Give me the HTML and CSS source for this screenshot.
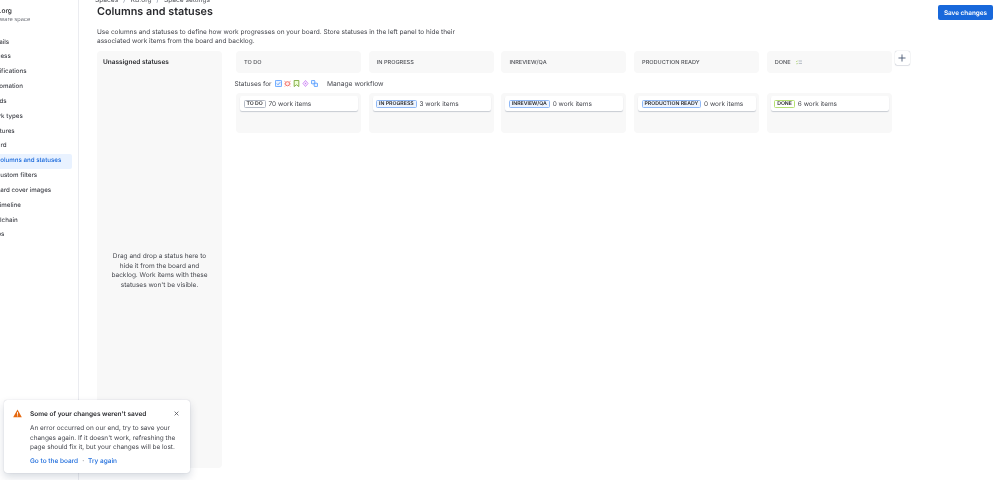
FILE: index.html
```html
<!DOCTYPE html>
<html lang="en">
<head>
<meta charset="utf-8">
<title>Columns and statuses</title>
<link rel="stylesheet" href="styles.css">
</head>
<body>
<div class="page">
  <aside class="sidebar">
    <div class="sidebar-inner">
      <div class="space">
        <div class="space-name">KB.org</div>
        <div class="space-type">Software space</div>
      </div>
      <nav class="nav">
        <a class="nav-item">Details</a>
        <a class="nav-item">Access</a>
        <a class="nav-item">Notifications</a>
        <a class="nav-item">Automation</a>
        <a class="nav-item">Fields</a>
        <a class="nav-item">Work types</a>
        <a class="nav-item">Features</a>
        <a class="nav-item">Board</a>
        <a class="nav-item sub active">Columns and statuses</a>
        <a class="nav-item sub">Custom filters</a>
        <a class="nav-item sub">Card cover images</a>
        <a class="nav-item sub">Timeline</a>
        <a class="nav-item">Toolchain</a>
        <a class="nav-item">Apps</a>
      </nav>
    </div>
  </aside>
  <main class="main">
    <div class="breadcrumbs"><span>Spaces</span><span class="sep">/</span><span>KB.org</span><span class="sep">/</span><span>Space settings</span></div>
    <div class="title-row">
      <h1 class="title">Columns and statuses</h1>
      <button class="save">Save changes</button>
    </div>
    <p class="intro">Use columns and statuses to define how work progresses on your board. Store statuses in the left panel to hide their associated work items from the board and backlog.</p>
    <div class="workspace">
      <section class="unassigned">
        <h2 class="un-title">Unassigned statuses</h2>
        <p class="un-text">Drag and drop a status here to hide it from the board and backlog. Work items with these statuses won't be visible.</p>
      </section>
      <section class="board">
        <div class="board-grid">
          <div class="col-head">TO DO</div>
          <div class="col-head">IN PROGRESS</div>
          <div class="col-head">INREVIEW/QA</div>
          <div class="col-head">PRODUCTION READY</div>
          <div class="col-head">DONE
            <svg class="done-icon" viewBox="0 0 8 6" width="6" height="5"><path d="M0 1l1 1 1.4-1.6M0 4.2l1 1 1.4-1.6" fill="none" stroke="#94c748" stroke-width=".8"/><path d="M3.6 1H8M3.6 4.2H8" fill="none" stroke="#8590a2" stroke-width=".8"/></svg>
          </div>
          <button class="add" aria-label="Add column"><svg viewBox="0 0 10 10" width="8" height="8"><path d="M5 .6v8.8M.6 5h8.8" stroke="#44546f" stroke-width="1.1" fill="none"/></svg></button>
          <div class="statuses-row">
            <span>Statuses for</span>
            <span class="types">
              <svg viewBox="0 0 9 9" width="7" height="7"><rect x=".5" y=".5" width="8" height="8" rx="1" fill="#e9f2ff" stroke="#388bff"/><path d="M2.4 4.6l1.5 1.5 2.8-3.2" fill="none" stroke="#388bff"/></svg>
              <svg viewBox="0 0 9 9" width="7" height="7"><circle cx="4.5" cy="4.8" r="2.7" fill="#ffeceb" stroke="#f15b50"/><path d="M.5 1.5l2 1.4M8.5 1.5l-2 1.4M.3 5h1.4M7.3 5h1.4M1 8.4l1.2-1.2M8 8.4L6.8 7.2" stroke="#f15b50" stroke-width=".8"/></svg>
              <svg viewBox="0 0 9 9" width="7" height="7"><path d="M1.5.6h6v7.8L4.5 6.2 1.5 8.4z" fill="#efffd6" stroke="#6a9a23"/></svg>
              <svg viewBox="0 0 9 9" width="7" height="7"><path d="M4.5.6L7.8 4.5 4.5 8.4 1.2 4.5z" fill="#f8eefe" stroke="#c97cf4"/><circle cx="4.5" cy="4.5" r=".9" fill="#c97cf4"/></svg>
              <svg viewBox="0 0 9 9" width="7" height="7"><rect x=".5" y=".5" width="4.4" height="4.4" rx="1" fill="#e9f2ff" stroke="#388bff"/><rect x="4.1" y="4.1" width="4.4" height="4.4" rx="1" fill="#e9f2ff" stroke="#388bff"/></svg>
            </span>
            <span class="manage">Manage workflow</span>
          </div>
          <div class="col-body"><div class="card"><span class="lozenge grey">TO DO</span><span class="count">70 work items</span></div></div>
          <div class="col-body"><div class="card"><span class="lozenge blue">IN PROGRESS</span><span class="count">3 work items</span></div></div>
          <div class="col-body"><div class="card"><span class="lozenge blue">INREVIEW/QA</span><span class="count">0 work items</span></div></div>
          <div class="col-body"><div class="card"><span class="lozenge blue">PRODUCTION READY</span><span class="count">0 work items</span></div></div>
          <div class="col-body"><div class="card"><span class="lozenge green">DONE</span><span class="count">6 work items</span></div></div>
        </div>
      </section>
    </div>
  </main>
</div>
<div class="toast">
  <svg class="warn" viewBox="0 0 10 10" width="9" height="9"><path d="M5 .5l4.8 8.8H.2z" fill="#e56910"/><path d="M5 3.4v3" stroke="#fff" stroke-width="1"/><circle cx="5" cy="7.6" r=".6" fill="#fff"/></svg>
  <div class="toast-body">
    <div class="toast-title">Some of your changes weren't saved</div>
    <p class="toast-text">An error occurred on our end, try to save your changes again. If it doesn't work, refreshing the page should fix it, but your changes will be lost.</p>
    <div class="toast-actions"><a>Go to the board</a><span class="dot">·</span><a>Try again</a></div>
  </div>
  <svg class="close" viewBox="0 0 8 8" width="5" height="5"><path d="M1 1l6 6M7 1L1 7" stroke="#44464d" stroke-width="1.2"/></svg>
</div>
</body>
</html>
```
FILE: styles.css
```css
* { box-sizing: border-box; }
html, body { margin: 0; height: 100%; overflow: hidden; }
body { font-family: Inter, "Liberation Sans", sans-serif; font-size: 6.2px; color: #292a2e; background: #fff; text-rendering: geometricPrecision; filter: blur(.25px); }
.page { display: flex; height: 480px; }
.sidebar { width: 79px; flex: none; border-right: 1px solid #ebecf0; overflow: hidden; }
.sidebar-inner { margin-left: -11px; width: 83px; padding-top: 7px; }
.space { height: 28.5px; }
.space-name { font-size: 6.6px; font-weight: 500; line-height: 9px; padding-left: 1.6px; }
.space-type { font-size: 5.6px; color: #6b6e76; line-height: 8px; }
.nav { display: flex; flex-direction: column; }
.nav-item { display: block; height: 14.85px; line-height: 14.85px; white-space: nowrap; color: #44464d; font-weight: 450; border-radius: 2px; }
.sub { padding-left: 6.7px; }
.active { color: #1868db; background: #e9f2ff; font-weight: 500; }
.main { flex: 1; min-width: 0; padding-left: 18px; }
.breadcrumbs { display: flex; gap: 5px; font-size: 6.6px; color: #505258; height: 2px; line-height: 0; margin-left: -2px; }
.sep { color: #8590a2; }
.title-row { display: flex; justify-content: space-between; align-items: flex-start; padding-right: 5px; height: 22px; margin-top: 3px; }
.title { font-size: 10.8px; line-height: 14px; font-weight: 600; margin: 0; color: #292a2e; }
.save { width: 55px; height: 15px; border: 0; border-radius: 2px; background: #1868db; color: #fff; font: 600 6.4px Inter, sans-serif; padding: 0; text-rendering: geometricPrecision; }
.intro { margin: 0; width: 378px; font-size: 6.5px; line-height: 9.6px; color: #44464d; height: 24px; padding-top: .5px; }
.workspace { display: flex; gap: 14px; align-items: flex-start; }
.unassigned { width: 125px; height: 417px; background: #f8f8f8; border-radius: 4px; padding: 5.5px 5.5px 0; flex: none; }
.un-title { margin: 0; font-size: 6.5px; line-height: 10px; font-weight: 600; will-change: transform; }
.un-text { margin: 185px 6.5px 0; text-align: center; font-size: 6.5px; line-height: 9.5px; color: #44464d; will-change: transform; }
.board-grid { display: grid; grid-template-columns: repeat(5, 125px) 13px; column-gap: 7.7px; grid-template-rows: 22px 20px 40px; }
.col-head { background: #f8f8f8; border-radius: 4px; font-size: 5.6px; color: #505258; font-weight: 500; padding: 1px 0 0 8px; display: flex; align-items: center; gap: 5px; }
.add { width: 15px; height: 14px; padding: 0; margin: 0 0 0 -4.7px; background: #fff; border: 0; border-radius: 2px; box-shadow: 0 0 1px rgba(9,30,66,.4), 0 1px 1px rgba(9,30,66,.1); display: flex; align-items: center; justify-content: center; }
.statuses-row { grid-column: 1 / -1; display: flex; align-items: center; font-size: 6.5px; color: #44464d; margin-left: -1.5px; padding-top: 1px; }
.types { display: flex; gap: 2px; margin-left: 3px; }
.manage { margin-left: 9.5px; font-size: 6.7px; }
.col-body { background: #f8f8f8; border-radius: 4px; padding: 3px 3px 3px 4px; }
.card { width: 118px; height: 15px; background: #fff; border-radius: 2px; box-shadow: 0 1px 1px rgba(9,30,66,.2); display: flex; align-items: center; padding-left: 3.5px; font-size: 6.45px; color: #44464d; }
.lozenge { font-size: 5.2px; font-weight: 600; line-height: 6px; padding: 0 1.9px; border-radius: 1.5px; border: .7px solid; color: #292a2e; margin-right: 3px; white-space: nowrap; }
.grey { border-color: #b3b9c4; }
.blue { border-color: #8fb8f6; background: #eef5ff; }
.green { border-color: #b3df72; }
.toast { position: fixed; left: 4px; top: 400px; width: 186px; height: 73px; background: #fff; border-radius: 3px; box-shadow: 0 4px 8px rgba(9,30,66,.16), 0 0 1px rgba(9,30,66,.3); display: flex; padding: 9px 8px 0 9px; }
.warn { flex: none; }
.toast-body { margin-left: 8px; width: 150px; }
.toast-title { font-size: 6.5px; font-weight: 600; line-height: 10px; white-space: nowrap; }
.toast-text { margin: 5px 0 0; font-size: 6.45px; line-height: 9.5px; color: #44464d; }
.toast-actions { margin-top: 3px; font-size: 6.5px; line-height: 10px; color: #1868db; font-weight: 500; display: flex; gap: 4px; }
.dot { color: #6b6e76; }
.close { position: absolute; right: 11px; top: 11px; }
```
